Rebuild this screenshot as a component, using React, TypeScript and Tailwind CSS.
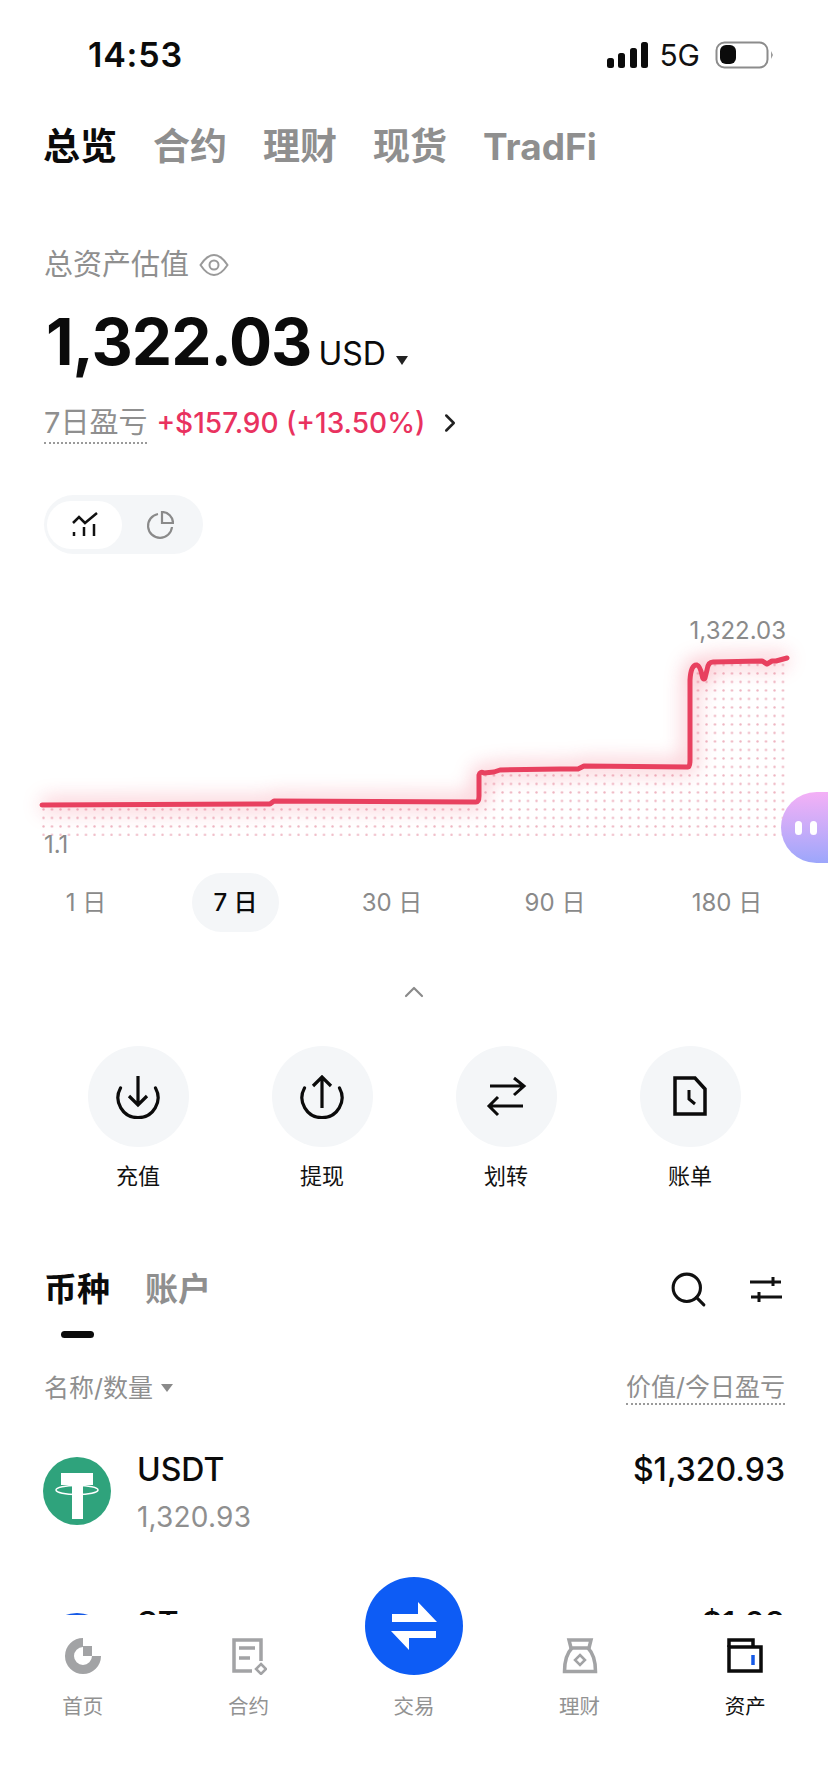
import { ChevronRight, ChevronUp, Search } from "lucide-react";

const fontStack = "font-['Inter','Noto_Sans_CJK_SC',sans-serif]";

const tabs = ["总览", "合约", "理财", "现货", "TradFi"];
const ranges = [
  { label: "1 日", className: "w-[44px] mr-[84px] text-[#8a8a8a]" },
  { label: "7 日", className: "w-[87px] mr-[84px] bg-[#f4f6f8] font-medium text-[#0b0b0b]" },
  { label: "30 日", className: "w-[58px] mr-[105px] text-[#8a8a8a]" },
  { label: "90 日", className: "w-[58px] mr-[107px] text-[#8a8a8a]" },
  { label: "180 日", className: "w-[72px] text-[#8a8a8a]" },
];

const linePath =
  "M42 805 L270 804 L274 801 L476 802 Q479 802 479 796 L479 775 Q480 771 484 773 L494 772 L500 770 L560 769 L578 769 L584 766 L688 767 Q690 767 690 760 L690 680 Q691 664 697 665 Q700 666 702 675 Q703 681 705 678 L707 670 Q708 662 713 662 L762 661 L767 664 L772 661 L776 661 L787 658";
const areaPath = `${linePath} L787 836 L42 836 Z`;

function DepositIcon() {
  return (
    <svg width="44" height="44" viewBox="0 0 44 44" fill="none" stroke="#0b0b0b" strokeWidth="3.2">
      <path d="M22 1 V30 M13 21 L22 30 L31 21" />
      <path d="M4.5 13 A20 20 0 1 0 39.5 13" strokeLinecap="round" />
    </svg>
  );
}

function WithdrawIcon() {
  return (
    <svg width="44" height="44" viewBox="0 0 44 44" fill="none" stroke="#0b0b0b" strokeWidth="3.2">
      <path d="M22 33 V2 M13 11 L22 2 L31 11" />
      <path d="M4.5 13 A20 20 0 1 0 39.5 13" strokeLinecap="round" />
    </svg>
  );
}

function TransferIcon() {
  return (
    <svg width="44" height="44" viewBox="0 0 44 44" fill="none" stroke="#0b0b0b" strokeWidth="3">
      <path d="M6 11 H39 M30 3 L40 11 L30 20" />
      <path d="M39 31 H6 M14 22 L5 31 L14 40" />
    </svg>
  );
}

function BillIcon() {
  return (
    <svg width="44" height="44" viewBox="0 0 44 44" fill="none" stroke="#0b0b0b" strokeWidth="3.5">
      <path d="M7 3 H27 L37 14 V39 H7 Z" />
      <path d="M21 15 V24 L27 29" strokeWidth="3" />
    </svg>
  );
}

function FilterIcon() {
  return (
    <svg width="32" height="26" viewBox="0 0 32 26" fill="none" stroke="#111" strokeWidth="3">
      <path d="M0 5 H31 M23 0 V9 M1 20 H32 M9 15 V25" />
    </svg>
  );
}

function TetherLogo() {
  return (
    <svg width="68" height="68" viewBox="0 0 68 68">
      <circle cx="34" cy="34" r="34" fill="#2fa37c" />
      <path d="M18 16 H50 V28 H40 V62 H29 V28 H18 Z" fill="#fff" />
      <ellipse cx="34" cy="33" rx="21" ry="4.5" fill="none" stroke="#fff" strokeWidth="1.5" />
    </svg>
  );
}

const actions = [
  { label: "充值", icon: <DepositIcon /> },
  { label: "提现", icon: <WithdrawIcon /> },
  { label: "划转", icon: <TransferIcon /> },
  { label: "账单", icon: <BillIcon /> },
];

const navItems = [
  {
    label: "首页",
    icon: (
      <svg width="38" height="38" viewBox="0 0 38 38" fill="#a2a3a5">
        <path d="M19 1 A18 18 0 1 0 37 19 L28 19 A9 9 0 1 1 19 10 Z" />
        <rect x="19" y="9" width="9" height="10" />
      </svg>
    ),
  },
  {
    label: "合约",
    icon: (
      <svg width="38" height="38" viewBox="0 0 38 38" fill="none" stroke="#a2a3a5" strokeWidth="3.5">
        <path d="M32 24 V3 H5 V34 H23" />
        <path d="M10 11 H26 M10 21 H21" />
        <path d="M32 27 L37 32 L32 37 L27 32 Z" strokeWidth="2.5" />
      </svg>
    ),
  },
  { label: "交易", icon: <div className="h-[38px]" /> },
  {
    label: "理财",
    icon: (
      <svg width="38" height="38" viewBox="0 0 38 38" fill="none" stroke="#a2a3a5" strokeWidth="3.5">
        <path d="M8 3 H30 L28 11 H10 Z" />
        <path d="M11 11 C6 16 3.5 24 3.5 34.5 H34.5 C34.5 24 32 16 27 11" />
        <path d="M19 18 L24 23 L19 28 L14 23 Z" strokeWidth="2.5" />
      </svg>
    ),
  },
  {
    label: "资产",
    icon: (
      <svg width="38" height="38" viewBox="0 0 38 38" fill="none" stroke="#0b0b0b" strokeWidth="3.5">
        <path d="M3 10 V3 H27 V10" />
        <path d="M3 10 H35 V34 H3 Z" />
        <path d="M27 18 V28" stroke="#1459e6" />
      </svg>
    ),
  },
];

export default function App() {
  return (
    <div className={`relative h-[1792px] w-[828px] overflow-hidden bg-white ${fontStack}`}>
      {/* status bar */}
      <div className="flex h-[110px] items-start justify-between pl-[88px] pr-[53px] pt-[36px]">
        <span className="text-[34px] leading-[38px] font-semibold tracking-[0.8px] text-[#0b0b0b]">14:53</span>
        <div className="flex items-center pt-[5px]">
          <svg width="41" height="26" viewBox="0 0 41 26" fill="#0b0b0b">
            <rect x="0" y="16" width="7" height="10" rx="2.5" />
            <rect x="11" y="11" width="7" height="15" rx="2.5" />
            <rect x="23" y="6" width="7" height="20" rx="2.5" />
            <rect x="34" y="0" width="7" height="26" rx="2.5" />
          </svg>
          <span className="ml-[11px] text-[30px] leading-[28px] font-normal text-[#111]">5G</span>
          <svg className="ml-[15px]" width="60" height="28" viewBox="0 0 60 28" fill="none">
            <rect x="1.5" y="1.5" width="51" height="25" rx="8" stroke="#8c8c8c" strokeWidth="2" />
            <rect x="5" y="4" width="16" height="19" rx="6" fill="#0b0b0b" />
            <path d="M56 10 L58 14 L56 18 Z" fill="#9a9a9a" />
          </svg>
        </div>
      </div>

      {/* top tabs */}
      <div className="flex h-[74px] items-start gap-[36px] pl-[43px] pt-[17px]">
        {tabs.map((tab, index) => (
          <span
            key={tab}
            className={`text-[37px] leading-[40px] font-bold ${index === 0 ? "text-[#0b0b0b]" : "text-[#8f8f8f]"}`}
          >
            {tab}
          </span>
        ))}
      </div>

      {/* total */}
      <div className="mt-[64px] flex items-center pl-[44px]">
        <span className="text-[29px] leading-[34px] text-[#8f8f8f]">总资产估值</span>
        <svg className="ml-[10px]" width="30" height="24" viewBox="0 0 30 24" fill="none" stroke="#9a9a9a" strokeWidth="2">
          <path d="M1.5 12 Q8 2 15 2 Q22 2 28.5 12 Q22 22 15 22 Q8 22 1.5 12 Z" />
          <circle cx="15" cy="12" r="4.5" />
        </svg>
      </div>
      <div className="mt-[24px] flex items-baseline pl-[46px]">
        <span className="text-[64px] leading-[72px] font-bold tracking-[-1px] text-[#0b0b0b]">1,322.03</span>
        <span className="ml-[7px] text-[32px] leading-[36px] font-normal text-[#0b0b0b]">USD</span>
        <svg className="ml-[10px]" width="12" height="9" viewBox="0 0 12 9" fill="#222">
          <path d="M0 0 H12 L6 9 Z" />
        </svg>
      </div>
      <div className="mt-[28px] flex items-center pl-[44px]">
        <span className="border-b-2 border-dotted border-[#9a9a9a] pb-[2px] text-[29px] leading-[34px] text-[#8f8f8f]">
          7日盈亏
        </span>
        <span className="mb-[4px] ml-[9px] text-[28px] leading-[34px] font-medium text-[#e9325f]">
          +$157.90 (+13.50%)
        </span>
        <ChevronRight className="mb-[4px] ml-[10px]" size={30} color="#222" strokeWidth={2} />
      </div>

      {/* chart type toggle */}
      <div className="ml-[44px] mt-[51px] flex h-[59px] w-[159px] items-center rounded-full bg-[#f4f6f8] pl-[3px]">
        <div className="flex h-[48px] w-[75px] items-center justify-center rounded-full bg-white">
          <svg width="28" height="26" viewBox="0 0 28 26" fill="none" stroke="#111" strokeWidth="2.5">
            <path d="M2 11 L8 5 L14 11 L26 1" />
            <path d="M3 20 V24 M13 15 V24 M23 12 V24" />
          </svg>
        </div>
        <div className="flex w-[75px] items-center justify-center">
          <svg width="28" height="28" viewBox="0 0 28 28" fill="none" stroke="#8a8a8a" strokeWidth="2.2">
            <path d="M12 3 A12 12 0 1 0 26 16" />
            <path d="M16 1 A11 11 0 0 1 27 12 H16 Z" />
          </svg>
        </div>
      </div>

      {/* chart */}
      <div className="relative mt-[56px] h-[257px]">
        <svg className="absolute left-0 top-0" width="828" height="257" viewBox="0 610 828 257">
          <defs>
            <pattern id="dots" width="8.5" height="8.5" patternUnits="userSpaceOnUse" x="42" y="672">
              <circle cx="1.5" cy="1.5" r="1.2" fill="#e9a0b0" />
            </pattern>
            <filter id="blur" x="-5%" y="-40%" width="110%" height="180%">
              <feGaussianBlur stdDeviation="10" />
            </filter>
          </defs>
          <path d={areaPath} fill="url(#dots)" opacity="0.8" />
          <path d={linePath} fill="none" stroke="#f35c75" strokeWidth="12" opacity="0.38" filter="url(#blur)" />
          <path d={linePath} fill="none" stroke="#e8405f" strokeWidth="5" strokeLinecap="round" strokeLinejoin="round" />
        </svg>
        <span className="absolute right-[42px] top-[6px] text-[24px] leading-[30px] text-[#8a8a8a]">1,322.03</span>
        <span className="absolute left-[44px] top-[220px] text-[24px] leading-[30px] text-[#8a8a8a]">1.1</span>
      </div>

      {/* range tabs */}
      <div className="relative mt-[6px] flex h-[59px] items-center pl-[64px]">
        {ranges.map((range) => (
          <span
            key={range.label}
            className={`flex h-[59px] items-center justify-center whitespace-nowrap rounded-full text-[24px] ${range.className}`}
          >
            {range.label}
          </span>
        ))}
      </div>

      <div className="mt-[44px] flex justify-center">
        <ChevronUp size={32} color="#8a8a8a" strokeWidth={1.6} />
      </div>

      {/* actions */}
      <div className="mt-[38px] grid grid-cols-4 px-[46px]">
        {actions.map((action) => (
          <div key={action.label} className="flex flex-col items-center">
            <div className="flex h-[101px] w-[101px] items-center justify-center rounded-full bg-[#f4f6f8]">
              {action.icon}
            </div>
            <span className="mt-[14px] text-[22px] leading-[30px] text-[#111]">{action.label}</span>
          </div>
        ))}
      </div>

      {/* assets list */}
      <div className="mt-[78px] flex items-start justify-between pl-[44px] pr-[46px]">
        <div className="flex gap-[35px]">
          <div className="flex flex-col items-center">
            <span className="text-[33px] leading-[40px] font-bold text-[#0b0b0b]">币种</span>
            <div className="mt-[22px] h-[7px] w-[33px] rounded-full bg-[#0b0b0b]" />
          </div>
          <span className="text-[33px] leading-[40px] font-bold text-[#8f8f8f]">账户</span>
        </div>
        <div className="flex items-center gap-[41px]">
          <Search size={41} color="#111" strokeWidth={1.8} />
          <FilterIcon />
        </div>
      </div>

      <div className="mt-[33px] flex items-center justify-between pl-[44px] pr-[43px]">
        <div className="flex items-center gap-[8px]">
          <span className="text-[25px] leading-[32px] text-[#8f8f8f]">名称/数量</span>
          <svg width="12" height="8" viewBox="0 0 12 8" fill="#8a8a8a">
            <path d="M0 0 H12 L6 8 Z" />
          </svg>
        </div>
        <span className="border-b-2 border-dotted border-[#9a9a9a] text-[25px] leading-[32px] text-[#8f8f8f]">
          价值/今日盈亏
        </span>
      </div>

      <div className="mt-[47px] flex items-start pl-[43px] pr-[43px]">
        <div className="mt-[5px]">
          <TetherLogo />
        </div>
        <div className="ml-[26px] flex-1">
          <div className="text-[32px] leading-[36px] font-medium text-[#0b0b0b]">USDT</div>
          <div className="mt-[12px] text-[28px] leading-[34px] tracking-[0.2px] text-[#8f8f8f]">1,320.93</div>
        </div>
        <div className="text-[32px] leading-[36px] font-medium text-[#0b0b0b]">$1,320.93</div>
      </div>

      {/* next row, mostly under the tab bar */}
      <div className="mt-[72px] flex items-start pl-[43px] pr-[43px]">
        <div className="mt-[7px] h-[68px] w-[68px] rounded-full bg-[#1459e6]" />
        <div className="ml-[26px] flex-1 text-[32px] leading-[36px] font-medium text-[#0b0b0b]">ST</div>
        <div className="text-[32px] leading-[36px] font-medium text-[#0b0b0b]">$1.08</div>
      </div>

      {/* bottom tab bar */}
      <div className="absolute inset-x-0 bottom-0 h-[177px] bg-white pt-[22px]">
        <div className="grid grid-cols-5">
          {navItems.map((item, index) => (
            <div key={item.label} className="flex flex-col items-center">
              {item.icon}
              <span
                className={`mt-[18px] text-[20.5px] leading-[28px] ${index === 4 ? "text-[#111]" : "text-[#929292]"}`}
              >
                {item.label}
              </span>
            </div>
          ))}
        </div>
      </div>

      {/* trade button */}
      <div className="absolute left-[365px] top-[1577px] flex h-[98px] w-[98px] items-center justify-center rounded-full bg-[#0d5cf5]">
        <svg width="46" height="48" viewBox="0 0 46 48" fill="#fff">
          <path d="M27 0 L46 20 H1 V12 H27 Z" />
          <path d="M45 36 V29 H0 L18 48 V36 Z" />
        </svg>
      </div>

      {/* floating assistant */}
      <div className="absolute left-[781px] top-[792px] flex h-[71px] w-[60px] items-center gap-[8px] rounded-l-full bg-gradient-to-b from-[#f4b0f6] to-[#9ca6fb] pl-[14px]">
        <div className="h-[14px] w-[7px] rounded-full bg-white" />
        <div className="h-[14px] w-[7px] rounded-full bg-white" />
      </div>
    </div>
  );
}
